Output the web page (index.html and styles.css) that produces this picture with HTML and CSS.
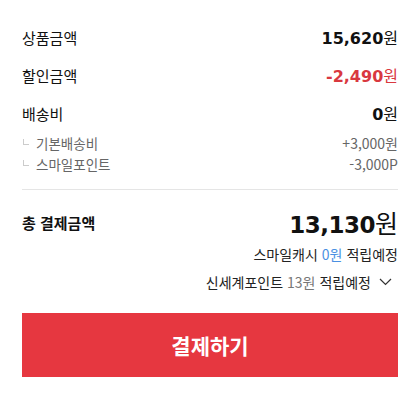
FILE: index.html
```html
<!DOCTYPE html>
<html lang="ko">
<head>
    <meta charset="UTF-8">
    <meta name="viewport" content="width=device-width, initial-scale=1.0">
    <title>결제금액</title>
    <link rel="stylesheet" href="styles.css">
</head>
<body>
    <div class="summary">
        <div class="row">
            <span class="label">상품금액</span>
            <span class="amount"><b>15,620</b>원</span>
        </div>
        <div class="row">
            <span class="label">할인금액</span>
            <span class="amount discount"><b>-2,490</b>원</span>
        </div>
        <div class="row">
            <span class="label">배송비</span>
            <span class="amount"><b>0</b>원</span>
        </div>
        <div class="sub-row">
            <span class="sub-label"><i class="corner"></i>기본배송비</span>
            <span class="sub-value">+3,000원</span>
        </div>
        <div class="sub-row">
            <span class="sub-label"><i class="corner"></i>스마일포인트</span>
            <span class="sub-value">-3,000P</span>
        </div>

        <div class="total">
            <span class="total-label">총 결제금액</span>
            <span class="total-amount"><b>13,130</b>원</span>
        </div>
        <div class="reward">스마일캐시 <span class="blue">0원</span> 적립예정</div>
        <div class="reward points">신세계포인트 <span class="gray">13원</span> 적립예정
            <svg class="chevron" width="13" height="8" viewBox="0 0 13 8"><path d="M1 1l5.5 5.5L12 1" fill="none" stroke="#333" stroke-width="1.2"/></svg>
        </div>

        <button class="pay-btn">결제하기</button>
    </div>
</body>
</html>
```

FILE: styles.css
```css
* {
    margin: 0;
    padding: 0;
    box-sizing: border-box;
}

body {
    background: #fff;
    color: #111;
    font-family: 'Noto Sans CJK KR', 'Noto Sans', sans-serif;
}

.summary {
    padding: 18px 22px 0 22px;
}

.row {
    display: flex;
    justify-content: space-between;
    align-items: center;
    height: 38px;
    font-size: 15px;
}

.label {
    color: #111;
}

.amount {
    font-size: 16px;
    color: #111;
}

.amount b,
.total-amount b {
    font-family: 'DejaVu Sans', sans-serif;
    font-weight: bold;
}

.discount {
    color: #d9383f;
}

.sub-row {
    display: flex;
    justify-content: space-between;
    align-items: center;
    height: 21px;
    font-size: 13px;
    color: #666;
}

.sub-label {
    display: flex;
    align-items: center;
    font-size: 13.5px;
}

.corner {
    display: inline-block;
    width: 6px;
    height: 6px;
    border-left: 1px solid #ccc;
    border-bottom: 1px solid #ccc;
    margin: 0 7px 2px 1px;
}

.sub-value {
    font-size: 14px;
    color: #666;
}

.total {
    display: flex;
    justify-content: space-between;
    align-items: center;
    margin-top: 15px;
    padding-top: 14px;
    border-top: 1px solid #e5e5e5;
    height: 51px;
}

.total-label {
    font-size: 15px;
    font-weight: bold;
}

.total-amount {
    font-size: 25px;
}

.total-amount b {
    font-size: 23px;
    letter-spacing: -0.5px;
}

.reward {
    display: flex;
    justify-content: flex-end;
    align-items: center;
    gap: 4px;
    height: 28px;
    font-size: 14px;
    color: #222;
}

.points {
    padding-right: 6px;
}

.blue {
    color: #4a90e2;
}

.gray {
    color: #777;
}

.chevron {
    margin-left: 4px;
}

.pay-btn {
    display: block;
    width: 100%;
    height: 64px;
    margin-top: 17px;
    border: none;
    background: #e63740;
    color: #fff;
    font-family: 'Noto Sans CJK KR', sans-serif;
    font-size: 21px;
    font-weight: bold;
    cursor: pointer;
}
```
